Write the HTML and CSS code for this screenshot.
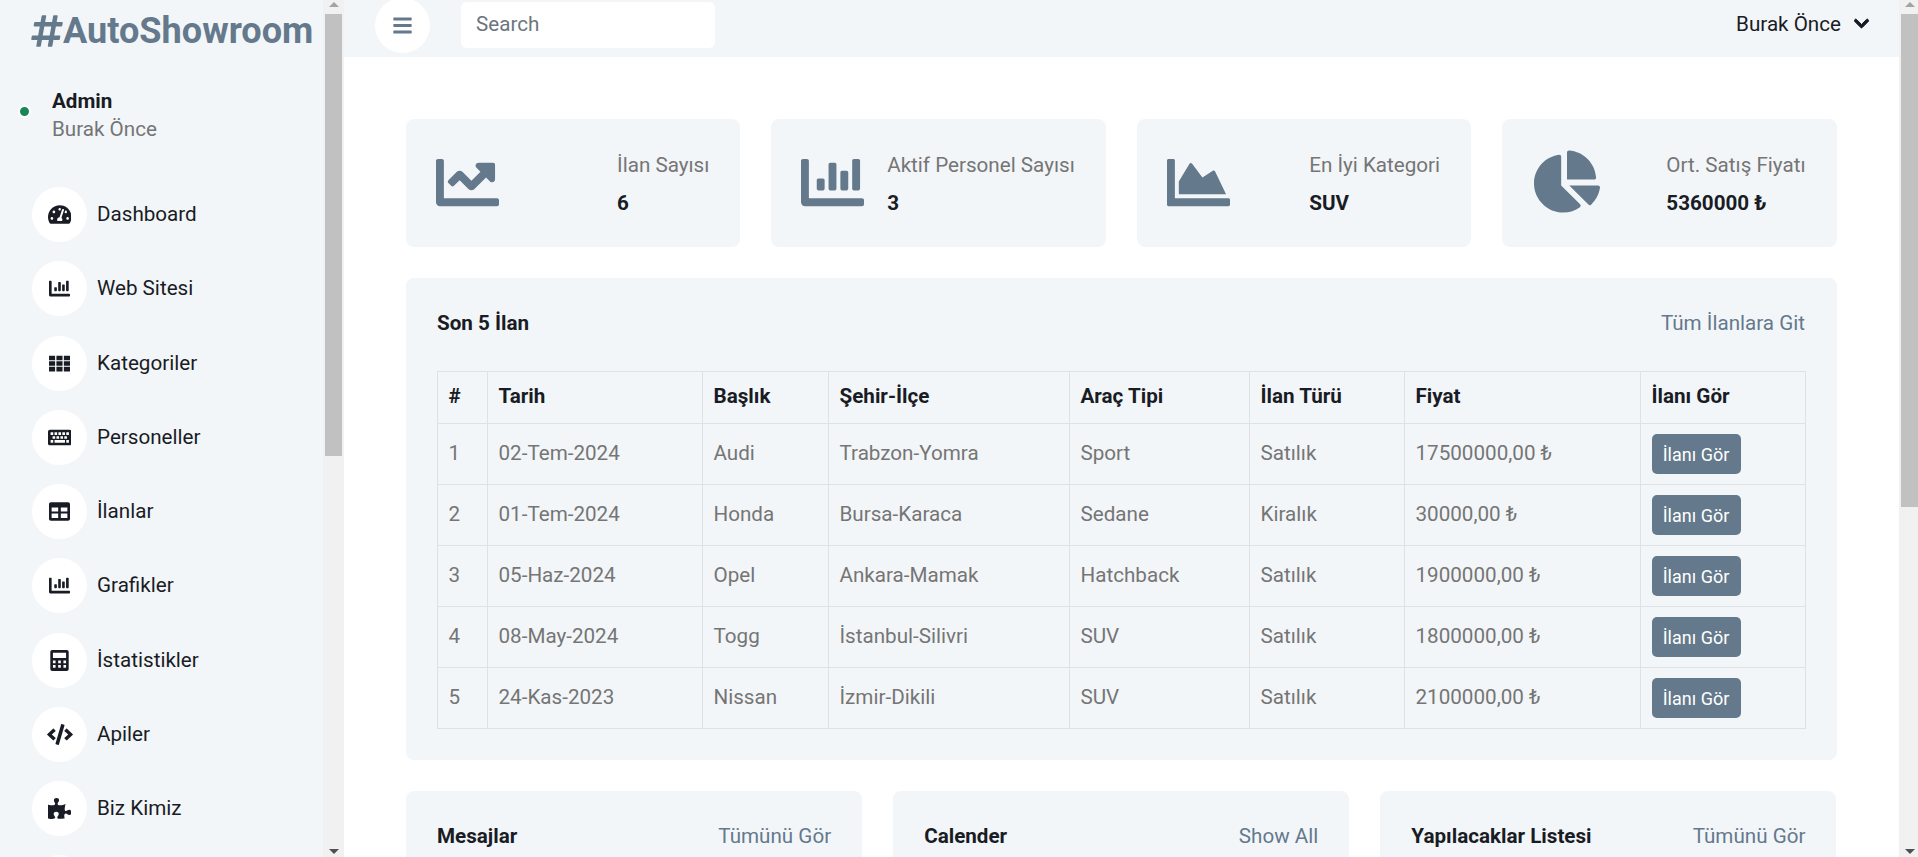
FILE: index.html
```html
<!DOCTYPE html>
<html lang="en">

<head>
    <meta charset="UTF-8">
    <meta name="viewport" content="width=device-width, initial-scale=1.0">
    <title>AutoShowroom</title>
    <link rel="stylesheet" href="styles.css">
</head>

<body>
    <svg class="defs" aria-hidden="true">
        <symbol id="i-hash" viewBox="0 0 448 512"><path fill-rule="evenodd" d="M440.667 182.109l7.143-40c1.313-7.355-4.342-14.109-11.813-14.109h-74.81l14.623-81.891C377.123 38.754 371.468 32 363.997 32h-40.632a12 12 0 0 0-11.813 9.891L296.175 128H197.54l14.623-81.891C213.477 38.754 207.822 32 200.35 32h-40.632a12 12 0 0 0-11.813 9.891L132.528 128H53.432a12 12 0 0 0-11.813 9.891l-7.143 40C33.163 185.246 38.818 192 46.289 192h74.81L98.242 320H19.146a12 12 0 0 0-11.813 9.891l-7.143 40C-1.123 377.246 4.532 384 12.003 384h74.81L72.19 465.891C70.877 473.246 76.532 480 84.003 480h40.632a12 12 0 0 0 11.813-9.891L151.826 384h98.634l-14.623 81.891C234.523 473.246 240.178 480 247.65 480h40.632a12 12 0 0 0 11.813-9.891L315.472 384h79.096a12 12 0 0 0 11.813-9.891l7.143-40c1.313-7.355-4.342-14.109-11.813-14.109h-74.81l22.857-128h79.096a12 12 0 0 0 11.813-9.891zM261.889 320h-98.634l22.857-128h98.634l-22.857 128z"/></symbol>
        <symbol id="i-gauge" viewBox="0 0 576 512"><path d="M288 32C128.94 32 0 160.94 0 320c0 52.8 14.25 102.26 39.06 144.8 5.61 9.62 16.3 15.2 27.44 15.2h443c11.14 0 21.83-5.58 27.44-15.2C561.75 422.26 576 372.8 576 320c0-159.06-128.94-288-288-288zm0 64c14.71 0 26.58 10.13 30.32 23.65-1.11 2.26-2.64 4.23-3.45 6.67l-9.22 27.67c-5.13 3.49-10.97 6.01-17.64 6.01-17.67 0-32-14.33-32-32S270.33 96 288 96zM96 384c-17.67 0-32-14.33-32-32s14.33-32 32-32 32 14.33 32 32-14.33 32-32 32zm48-160c-17.67 0-32-14.33-32-32s14.33-32 32-32 32 14.33 32 32-14.33 32-32 32zm246.77-72.41l-61.33 184C343.13 347.33 352 364.54 352 384c0 11.72-3.38 22.55-8.88 32H232.88c-5.5-9.45-8.88-20.28-8.88-32 0-33.94 26.5-61.43 59.9-63.59l61.34-184.01c4.17-12.56 17.73-19.45 30.36-15.17 12.57 4.19 19.35 17.79 15.17 30.36zm14.66 57.2l15.52-46.55c3.47-1.29 7.13-2.23 11.05-2.23 17.67 0 32 14.33 32 32s-14.33 32-32 32c-11.38-.01-20.89-6.28-26.57-15.22zM480 384c-17.67 0-32-14.33-32-32s14.33-32 32-32 32 14.33 32 32-14.33 32-32 32z"/></symbol>
        <symbol id="i-bar" viewBox="0 0 512 512"><path d="M332.8 320h38.4c6.4 0 12.8-6.4 12.8-12.8V172.8c0-6.4-6.4-12.8-12.8-12.8h-38.4c-6.4 0-12.8 6.4-12.8 12.8v134.4c0 6.4 6.4 12.8 12.8 12.8zm96 0h38.4c6.4 0 12.8-6.4 12.8-12.8V76.8c0-6.4-6.4-12.8-12.8-12.8h-38.4c-6.4 0-12.8 6.4-12.8 12.8v230.4c0 6.4 6.4 12.8 12.8 12.8zm-288 0h38.4c6.4 0 12.8-6.4 12.8-12.8v-70.4c0-6.4-6.4-12.8-12.8-12.8h-38.4c-6.4 0-12.8 6.4-12.8 12.8v70.4c0 6.4 6.4 12.8 12.8 12.8zm96 0h38.4c6.4 0 12.8-6.4 12.8-12.8V108.8c0-6.4-6.4-12.8-12.8-12.8h-38.4c-6.4 0-12.8 6.4-12.8 12.8v198.4c0 6.4 6.4 12.8 12.8 12.8zM496 384H64V80c0-8.84-7.16-16-16-16H16C7.16 64 0 71.16 0 80v336c0 17.67 14.33 32 32 32h464c8.84 0 16-7.16 16-16v-32c0-8.84-7.16-16-16-16z"/></symbol>
        <symbol id="i-line" viewBox="0 0 512 512"><path d="M496 384H64V80c0-8.84-7.16-16-16-16H16C7.16 64 0 71.16 0 80v336c0 17.67 14.33 32 32 32h464c8.84 0 16-7.16 16-16v-32c0-8.84-7.16-16-16-16zM464 96H345.94c-21.38 0-32.09 25.85-16.97 40.97l32.4 32.4L288 242.75l-73.37-73.37c-12.5-12.5-32.76-12.5-45.25 0l-68.69 68.69c-6.25 6.25-6.25 16.38 0 22.63l22.62 22.62c6.25 6.25 16.38 6.25 22.63 0L192 237.25l73.37 73.37c12.5 12.5 32.76 12.5 45.25 0l96-96 32.4 32.4c15.12 15.12 40.97 4.41 40.97-16.97V112c.01-8.84-7.15-16-15.99-16z"/></symbol>
        <symbol id="i-area" viewBox="0 0 512 512"><path d="M500 384c6.6 0 12 5.4 12 12v40c0 6.6-5.4 12-12 12H12c-6.6 0-12-5.4-12-12V76c0-6.6 5.4-12 12-12h40c6.6 0 12 5.4 12 12v308h436zM372.7 159.5L288 216l-85.3-113.7c-5.1-6.8-15.5-6.3-19.9 1L96 248v104h384l-89.9-187.8c-3.2-6.5-11.4-8.7-17.4-4.7z"/></symbol>
        <symbol id="i-pie" viewBox="0 0 544 512"><path d="M527.79 288H290.5l158.03 158.03c6.04 6.04 15.98 6.53 22.19.68 38.7-36.46 65.32-85.61 73.13-140.86 1.34-9.46-6.51-17.85-16.06-17.85zm-15.83-64.8C503.72 103.74 408.26 8.28 288.8.04 279.68-.59 272 7.1 272 16.24V240h223.77c9.14 0 16.82-7.68 16.19-16.8zM224 288V50.71c0-9.55-8.39-17.4-17.84-16.06C86.99 51.49-4.1 155.6.14 280.37 4.5 408.51 114.83 513.59 243.03 511.98c50.4-.63 96.97-16.87 135.26-44.03 7.9-5.6 8.42-17.23 1.57-24.08L224 288z"/></symbol>
        <symbol id="i-th" viewBox="0 0 512 512"><path d="M0 64h149v112H0zM181 64h149v112H181zM362 64h150v112H362zM0 200h149v112H0zM181 200h149v112H181zM362 200h150v112H362zM0 336h149v112H0zM181 336h149v112H181zM362 336h150v112H362z"/></symbol>
        <symbol id="i-keyboard" viewBox="0 0 576 512"><path fill-rule="evenodd" d="M48 64h480c26.5 0 48 21.5 48 48v288c0 26.5-21.5 48-48 48H48c-26.5 0-48-21.5-48-48V112c0-26.5 21.5-48 48-48zM64 128v64h64v-64zM160 128v64h64v-64zM256 128v64h64v-64zM352 128v64h64v-64zM448 128v64h64v-64zM112 224v64h64v-64zM208 224v64h64v-64zM304 224v64h64v-64zM400 224v64h64v-64zM64 320v64h64v-64zM160 320v64h256v-64zM448 320v64h64v-64z"/></symbol>
        <symbol id="i-table" viewBox="0 0 512 512"><path fill-rule="evenodd" d="M48 32h416c26.5 0 48 21.5 48 48v352c0 26.5-21.5 48-48 48H48c-26.5 0-48-21.5-48-48V80c0-26.5 21.5-48 48-48zM64 160v96h160v-96zM288 160v96h160v-96zM64 304v112h160V304zM288 304v112h160V304z"/></symbol>
        <symbol id="i-calc" viewBox="0 0 448 512"><path fill-rule="evenodd" d="M48 0h352c26.5 0 48 21.5 48 48v416c0 26.5-21.5 48-48 48H48c-26.5 0-48-21.5-48-48V48C0 21.5 21.5 0 48 0zM64 64v128h320V64zM64 256v64h64v-64zM192 256v64h64v-64zM320 256v64h64v-64zM64 368v64h64v-64zM192 368v64h64v-64zM320 368v64h64v-64z"/></symbol>
        <symbol id="i-code" viewBox="0 0 640 512"><path d="M278.9 511.5l-61-17.7c-6.4-1.8-10-8.5-8.2-14.9L346.2 8.7c1.8-6.4 8.5-10 14.9-8.2l61 17.7c6.4 1.8 10 8.5 8.2 14.9L293.8 503.3c-1.9 6.4-8.5 10.1-14.9 8.2zm-114-112.2l43.5-46.4c4.6-4.9 4.3-12.7-.8-17.2L117 256l90.6-79.7c5.1-4.5 5.5-12.3.8-17.2l-43.5-46.4c-4.5-4.8-12.1-5.1-17-.5L3.8 247.2c-5.1 4.7-5.1 12.8 0 17.5l144.1 135.1c4.9 4.6 12.5 4.4 17-.5zm327.2.6l144.1-135.1c5.1-4.7 5.1-12.8 0-17.5L492.1 112.1c-4.8-4.5-12.4-4.3-17 .5L431.6 159c-4.6 4.9-4.3 12.7.8 17.2L523 256l-90.6 79.7c-5.1 4.5-5.5 12.3-.8 17.2l43.5 46.4c4.5 4.9 12.1 5.1 17 .6z"/></symbol>
        <symbol id="i-puzzle" viewBox="0 0 576 512"><path d="M519.442 288.651c-41.519 0-59.5 31.593-82.058 31.593C377.409 320.244 432 144 432 144s-196.288 80-196.288-3.297c0-35.827 36.288-46.25 36.288-85.985C272 19.216 243.885 0 210.539 0c-34.654 0-66.366 18.891-66.366 56.346 0 41.364 31.711 59.277 31.711 81.75C175.885 207.719 0 166.758 0 166.758v333.237s178.635 41.047 178.635-28.662c0-22.473-40-40.107-40-81.471 0-37.456 29.25-56.346 63.577-56.346 33.673 0 61.788 19.216 61.788 54.717 0 39.735-36.288 50.158-36.288 85.985 0 60.803 129.675 25.73 181.23 25.73 0 0-34.725-120.101 25.827-120.101 35.962 0 46.423 36.152 86.308 36.152C556.712 416 576 387.99 576 354.443c0-34.199-18.962-65.792-56.558-65.792z"/></symbol>
        <symbol id="i-bars" viewBox="0 0 448 512"><path d="M16 132h416c8.837 0 16-7.163 16-16V76c0-8.837-7.163-16-16-16H16C7.163 60 0 67.163 0 76v40c0 8.837 7.163 16 16 16zm0 160h416c8.837 0 16-7.163 16-16v-40c0-8.837-7.163-16-16-16H16c-8.837 0-16 7.163-16 16v40c0 8.837 7.163 16 16 16zm0 160h416c8.837 0 16-7.163 16-16v-40c0-8.837-7.163-16-16-16H16c-8.837 0-16 7.163-16 16v40c0 8.837 7.163 16 16 16z"/></symbol>
        <symbol id="i-chevron" viewBox="0 0 448 512"><path d="M207.029 381.476L12.686 187.132c-9.373-9.373-9.373-24.569 0-33.941l22.667-22.667c9.357-9.357 24.522-9.375 33.901-.04L224 284.505l154.745-154.021c9.379-9.335 24.544-9.317 33.901.04l22.667 22.667c9.373 9.373 9.373 24.569 0 33.941L240.971 381.476c-9.373 9.372-24.569 9.372-33.942 0z"/></symbol>
    </svg>

    <div class="app">
        <aside class="sidebar">
            <div class="side-inner">
                <h3 class="logo"><svg class="logo-hash"><use href="#i-hash"/></svg>AutoShowroom</h3>
                <div class="side-user">
                    <span class="dot"></span>
                    <div>
                        <div class="side-role">Admin</div>
                        <div class="side-name">Burak Önce</div>
                    </div>
                </div>
                <nav class="nav">
                    <a class="nav-item"><span class="circle"><svg class="ni wide"><use href="#i-gauge"/></svg></span>Dashboard</a>
                    <a class="nav-item"><span class="circle"><svg class="ni"><use href="#i-bar"/></svg></span>Web Sitesi</a>
                    <a class="nav-item"><span class="circle"><svg class="ni"><use href="#i-th"/></svg></span>Kategoriler</a>
                    <a class="nav-item"><span class="circle"><svg class="ni wide"><use href="#i-keyboard"/></svg></span>Personeller</a>
                    <a class="nav-item"><span class="circle"><svg class="ni"><use href="#i-table"/></svg></span>İlanlar</a>
                    <a class="nav-item"><span class="circle"><svg class="ni"><use href="#i-bar"/></svg></span>Grafikler</a>
                    <a class="nav-item"><span class="circle"><svg class="ni"><use href="#i-calc"/></svg></span>İstatistikler</a>
                    <a class="nav-item"><span class="circle"><svg class="ni code"><use href="#i-code"/></svg></span>Apiler</a>
                    <a class="nav-item"><span class="circle"><svg class="ni wide"><use href="#i-puzzle"/></svg></span>Biz Kimiz</a>
                    <a class="nav-item"><span class="circle"></span></a>
                </nav>
            </div>
            <div class="vbar vbar-side">
                <span class="arrow up"></span>
                <span class="thumb thumb-side"></span>
                <span class="arrow down"></span>
            </div>
        </aside>

        <div class="content">
            <main class="main">
                <header class="topbar">
                    <button class="circle toggle"><svg class="ni bars"><use href="#i-bars"/></svg></button>
                    <input class="search" type="text" placeholder="Search">
                    <div class="user">Burak Önce <svg class="chev"><use href="#i-chevron"/></svg></div>
                </header>

                <div class="page">
                    <section class="stats">
                        <div class="card stat">
                            <svg class="stat-icon"><use href="#i-line"/></svg>
                            <div>
                                <p class="stat-label">İlan Sayısı</p>
                                <h6 class="stat-value">6</h6>
                            </div>
                        </div>
                        <div class="card stat">
                            <svg class="stat-icon"><use href="#i-bar"/></svg>
                            <div>
                                <p class="stat-label">Aktif Personel Sayısı</p>
                                <h6 class="stat-value">3</h6>
                            </div>
                        </div>
                        <div class="card stat">
                            <svg class="stat-icon"><use href="#i-area"/></svg>
                            <div>
                                <p class="stat-label">En İyi Kategori</p>
                                <h6 class="stat-value">SUV</h6>
                            </div>
                        </div>
                        <div class="card stat">
                            <svg class="stat-icon pie"><use href="#i-pie"/></svg>
                            <div>
                                <p class="stat-label">Ort. Satış Fiyatı</p>
                                <h6 class="stat-value">5360000 ₺</h6>
                            </div>
                        </div>
                    </section>

                    <section class="card listing">
                        <div class="card-head">
                            <h6>Son 5 İlan</h6>
                            <a>Tüm İlanlara Git</a>
                        </div>
                        <table>
                            <colgroup>
                                <col class="c-no"><col class="c-date"><col class="c-title"><col class="c-city">
                                <col class="c-type"><col class="c-kind"><col class="c-price"><col class="c-btn">
                            </colgroup>
                            <thead>
                                <tr>
                                    <th>#</th>
                                    <th>Tarih</th>
                                    <th>Başlık</th>
                                    <th>Şehir-İlçe</th>
                                    <th>Araç Tipi</th>
                                    <th>İlan Türü</th>
                                    <th>Fiyat</th>
                                    <th>İlanı Gör</th>
                                </tr>
                            </thead>
                            <tbody>
                                <tr>
                                    <td>1</td><td>02-Tem-2024</td><td>Audi</td><td>Trabzon-Yomra</td>
                                    <td>Sport</td><td>Satılık</td><td>17500000,00 ₺</td>
                                    <td><a class="btn">İlanı Gör</a></td>
                                </tr>
                                <tr>
                                    <td>2</td><td>01-Tem-2024</td><td>Honda</td><td>Bursa-Karaca</td>
                                    <td>Sedane</td><td>Kiralık</td><td>30000,00 ₺</td>
                                    <td><a class="btn">İlanı Gör</a></td>
                                </tr>
                                <tr>
                                    <td>3</td><td>05-Haz-2024</td><td>Opel</td><td>Ankara-Mamak</td>
                                    <td>Hatchback</td><td>Satılık</td><td>1900000,00 ₺</td>
                                    <td><a class="btn">İlanı Gör</a></td>
                                </tr>
                                <tr>
                                    <td>4</td><td>08-May-2024</td><td>Togg</td><td>İstanbul-Silivri</td>
                                    <td>SUV</td><td>Satılık</td><td>1800000,00 ₺</td>
                                    <td><a class="btn">İlanı Gör</a></td>
                                </tr>
                                <tr>
                                    <td>5</td><td>24-Kas-2023</td><td>Nissan</td><td>İzmir-Dikili</td>
                                    <td>SUV</td><td>Satılık</td><td>2100000,00 ₺</td>
                                    <td><a class="btn">İlanı Gör</a></td>
                                </tr>
                            </tbody>
                        </table>
                    </section>

                    <section class="bottom">
                        <div class="card panel">
                            <div class="card-head">
                                <h6>Mesajlar</h6>
                                <a>Tümünü Gör</a>
                            </div>
                        </div>
                        <div class="card panel">
                            <div class="card-head">
                                <h6>Calender</h6>
                                <a>Show All</a>
                            </div>
                        </div>
                        <div class="card panel">
                            <div class="card-head">
                                <h6>Yapılacaklar Listesi</h6>
                                <a>Tümünü Gör</a>
                            </div>
                        </div>
                    </section>
                </div>
            </main>
            <div class="vbar vbar-page">
                <span class="arrow up"></span>
                <span class="thumb thumb-page"></span>
                <span class="arrow down"></span>
            </div>
        </div>
    </div>
</body>

</html>
```

FILE: styles.css
```css
* {
    box-sizing: border-box;
}

body {
    font-family: Roboto, "Liberation Sans", sans-serif;
    font-size: 20.64px;
    line-height: 1.5;
    color: #757575;
    background-color: #ffffff;
    margin: 0;
    overflow: hidden;
}

.defs {
    display: none;
}

.app {
    display: flex;
    height: 857px;
}

.sidebar {
    display: flex;
    flex: 0 0 344px;
    background-color: #f3f6f9;
}

.side-inner {
    flex: 1;
    min-width: 0;
    overflow: hidden;
}

.logo {
    display: flex;
    align-items: center;
    margin: 0;
    padding: 8px 0 0 31px;
    font-size: 36.1px;
    line-height: 46px;
    font-weight: 700;
    color: #64798c;
    white-space: nowrap;
}

.logo-hash {
    flex: 0 0 32px;
    height: 36px;
    fill: #64798c;
}

.side-user {
    display: flex;
    align-items: center;
    margin-top: 31px;
    padding-left: 18px;
    height: 60px;
}

.side-role {
    font-weight: 700;
    color: #191c24;
    line-height: 28px;
}

.side-name {
    line-height: 28px;
}

.dot {
    flex: 0 0 13px;
    height: 13px;
    margin: 0 21px 8px 0;
    border-radius: 50%;
    background-color: #198754;
    border: 2px solid #ffffff;
}

.nav {
    display: flex;
    flex-direction: column;
    gap: 19.25px;
    margin-top: 42px;
    padding-left: 32px;
}

.nav-item {
    display: flex;
    align-items: center;
    gap: 10px;
    color: #191c24;
    height: 55px;
}

.circle {
    display: flex;
    align-items: center;
    justify-content: center;
    flex: 0 0 55px;
    width: 55px;
    height: 55px;
    border-radius: 50%;
    background-color: #ffffff;
    border: none;
    padding: 0;
}

.ni {
    width: 21px;
    height: 21px;
    fill: #191c24;
}

.ni.wide {
    width: 23.5px;
}

.ni.code {
    width: 26px;
}

.vbar {
    display: flex;
    flex-direction: column;
    align-items: stretch;
    background-color: #f1f1f1;
    height: 857px;
}

.vbar-side {
    flex: 0 0 21px;
    padding: 0 2px;
}

.vbar-page {
    flex: 0 0 19px;
    padding-left: 2px;
}

.arrow {
    position: relative;
    flex: 0 0 14px;
}

.arrow::after {
    content: "";
    position: absolute;
    left: 50%;
    margin-left: -5px;
    border-left: 5px solid transparent;
    border-right: 5px solid transparent;
}

.arrow.up::after {
    top: 2px;
    border-bottom: 5px solid #a3a3a3;
}

.arrow.down {
    margin-top: auto;
}

.arrow.down::after {
    bottom: 3px;
    border-top: 5px solid #505050;
}

.thumb {
    background-color: #c1c1c1;
}

.thumb-side {
    height: 442px;
}

.thumb-page {
    height: 493px;
}

.content {
    display: flex;
    flex: 1;
    min-width: 0;
}

.main {
    flex: 1;
    min-width: 0;
    height: 857px;
    overflow: hidden;
}

.topbar {
    display: flex;
    align-items: center;
    gap: 31px;
    height: 57px;
    padding: 0 30px 7px 31px;
    background-color: #f3f6f9;
}

.toggle {
    cursor: pointer;
}

.ni.bars {
    width: 19px;
    height: 21px;
    fill: #64798c;
}

.search {
    width: 254px;
    height: 46px;
    padding: 0 15px 2px;
    border: none;
    border-radius: 6px;
    background-color: #ffffff;
    font-family: inherit;
    font-size: 20.64px;
}

.search::placeholder {
    color: #6c757d;
}

.user {
    display: flex;
    align-items: center;
    gap: 13px;
    margin-left: auto;
    margin-top: -2px;
    color: #191c24;
}

.chev {
    width: 15px;
    height: 17px;
    fill: #191c24;
    stroke: #191c24;
    stroke-width: 30;
}

.page {
    padding: 62px 62.5px 0 62px;
}

.card {
    background-color: #f3f6f9;
    border-radius: 8px;
    padding: 31px;
}

.stats {
    display: grid;
    grid-template-columns: repeat(4, 1fr);
    gap: 31px;
}

.stat {
    display: flex;
    align-items: center;
    justify-content: space-between;
    height: 128px;
    padding: 31px 31px 31px 30px;
}

.stat-icon {
    width: 63px;
    height: 63px;
    margin-bottom: 2px;
    fill: #64798c;
}

.stat-icon.pie {
    width: 66px;
    margin: 0 0 3px 1.5px;
}

.stat-label {
    margin: 0 0 9px;
    line-height: 30px;
    padding-top: 1px;
}

.stat-value {
    margin: 0;
    font-size: 20.64px;
    line-height: 28px;
    font-weight: 700;
    color: #191c24;
}

.listing {
    margin-top: 31px;
    height: 482px;
    padding-right: 31.5px;
}

.card-head {
    display: flex;
    align-items: center;
    justify-content: space-between;
    height: 28px;
    margin-bottom: 34px;
}

.card-head h6 {
    margin: 0;
    font-size: 20.64px;
    font-weight: 700;
    color: #191c24;
}

.card-head a {
    color: #64798c;
}

table {
    width: 100%;
    table-layout: fixed;
    border-collapse: collapse;
}

.c-no { width: 50px; }
.c-date { width: 215px; }
.c-title { width: 126px; }
.c-city { width: 241px; }
.c-type { width: 180px; }
.c-kind { width: 155px; }
.c-price { width: 236px; }
.c-btn { width: 165px; }

th,
td {
    border: 1px solid #dee2e6;
    padding: 0 10px 0 10.5px;
    text-align: left;
    white-space: nowrap;
}

th {
    height: 52px;
    padding-bottom: 2px;
    font-weight: 700;
    color: #191c24;
}

td {
    height: 61px;
    padding-bottom: 2px;
}

.btn {
    display: inline-flex;
    align-items: center;
    justify-content: center;
    width: 89px;
    height: 40px;
    margin-top: 2px;
    vertical-align: middle;
    border-radius: 5px;
    background-color: #64798c;
    color: #ffffff;
    font-size: 18px;
}

.bottom {
    display: grid;
    grid-template-columns: repeat(3, 1fr);
    gap: 31px;
    margin-top: 31px;
}
```
